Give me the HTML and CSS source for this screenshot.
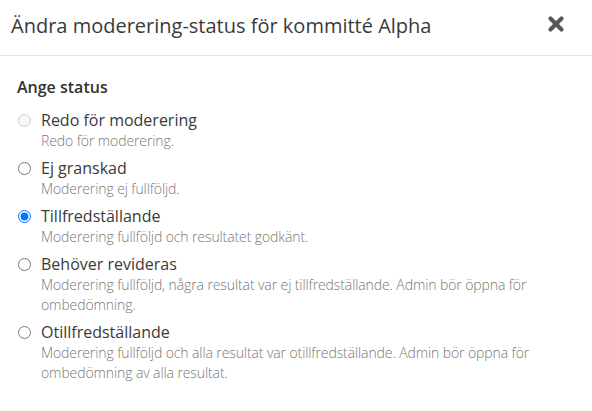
FILE: index.html
```html
<!DOCTYPE html>
<html lang="sv">
<head>
<meta charset="utf-8">
<link rel="stylesheet" href="styles.css">
</head>
<body>
<div class="modal">
  <div class="modal-header">
    <h4 class="modal-title">Ändra moderering-status för kommitté Alpha</h4>
    <button class="close" type="button" aria-label="Stäng">
      <svg width="18" height="18" viewBox="0 0 18 18"><path d="M3.5 3.5 L14.5 14.5 M14.5 3.5 L3.5 14.5" stroke="#575757" stroke-width="4.2" stroke-linecap="round"/></svg>
    </button>
  </div>
  <div class="modal-body">
    <div class="group-label">Ange status</div>
    <label class="option disabled">
      <input type="radio" name="status" disabled>
      <span class="text"><span class="title">Redo för moderering</span><span class="desc">Redo för moderering.</span></span>
    </label>
    <label class="option">
      <input type="radio" name="status">
      <span class="text"><span class="title">Ej granskad</span><span class="desc">Moderering ej fullföljd.</span></span>
    </label>
    <label class="option">
      <input type="radio" name="status" checked>
      <span class="text"><span class="title">Tillfredställande</span><span class="desc">Moderering fullföljd och resultatet godkänt.</span></span>
    </label>
    <label class="option">
      <input type="radio" name="status">
      <span class="text"><span class="title">Behöver revideras</span><span class="desc">Moderering fullföljd, några resultat var ej tillfredställande. Admin bör öppna för ombedömning.</span></span>
    </label>
    <label class="option">
      <input type="radio" name="status">
      <span class="text"><span class="title">Otillfredställande</span><span class="desc">Moderering fullföljd och alla resultat var otillfredställande. Admin bör öppna för ombedömning av alla resultat.</span></span>
    </label>
  </div>
</div>
</body>
</html>
```
FILE: styles.css
```css
html, body {
  margin: 0;
  padding: 0;
  background: #fff;
}
body {
  font-family: "Open Sans", "Liberation Sans", sans-serif;
  color: #333;
}
.modal {
  width: 592px;
  height: 411px;
  background: #fff;
}
.modal-header {
  display: flex;
  align-items: center;
  justify-content: space-between;
  padding: 12px 27px 15px 11px;
  border-bottom: 1px solid #e5e5e5;
}
.modal-title {
  margin: 0;
  font-size: 20px;
  font-weight: 400;
  line-height: 28px;
  color: #3a3a3a;
}
.close {
  border: 0;
  background: none;
  padding: 0;
  display: flex;
  margin-top: -4px;
}
.modal-body {
  padding: 20px 17px 15px 17px;
}
.group-label {
  font-weight: 600;
  font-size: 16px;
  line-height: 22px;
  margin-bottom: 11px;
}
.option {
  display: flex;
  align-items: flex-start;
  margin-bottom: 6px;
}
.option input {
  margin: 5px 10px 0 1px;
  width: 13px;
  height: 13px;
  flex: none;
}
.text {
  display: flex;
  flex-direction: column;
}
.title {
  font-size: 16px;
  font-weight: 400;
  line-height: 22px;
  color: #3a3a3a;
}
.desc {
  font-size: 14px;
  font-weight: 300;
  line-height: 20px;
  letter-spacing: -0.1px;
  color: #777;
}
```
